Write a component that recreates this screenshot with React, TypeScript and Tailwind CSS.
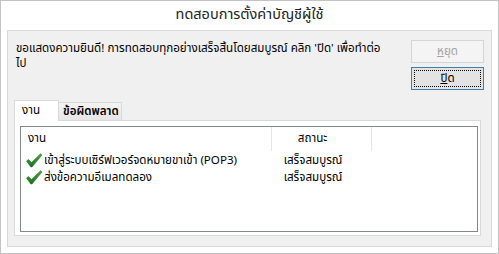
import React from 'react'

const font = { fontFamily: "Tahoma, 'Leelawadee UI', 'Noto Sans Thai', 'Noto Sans', 'DejaVu Sans', sans-serif" }

function Check() {
  return (
    <svg width="18" height="15" viewBox="0 0 18 15" className="shrink-0">
      <defs>
        <linearGradient id="chk" x1="0" y1="0" x2="0" y2="1">
          <stop offset="0" stopColor="#4fa84a" />
          <stop offset="1" stopColor="#15711a" />
        </linearGradient>
      </defs>
      <polygon points="1.5,8 3.5,6.5 6.5,9.5 15.5,0.8 17,2 7,14 5.8,14" fill="url(#chk)" stroke="#1b5e1b" strokeWidth="0.5" strokeLinejoin="round" />
    </svg>
  )
}

const rows = [
  { task: 'เข้าสู่ระบบเซิร์ฟเวอร์จดหมายขาเข้า (POP3)', status: 'เสร็จสมบูรณ์' },
  { task: 'ส่งข้อความอีเมลทดลอง', status: 'เสร็จสมบูรณ์' },
]

export default function App() {
  return (
    <div
      style={font}
      className="w-[499px] h-[254px] bg-white border border-[#c4c4c4] flex flex-col text-[11.6px] text-black"
    >
      {/* title */}
      <div className="h-[29px] flex items-center justify-center text-[14.5px] text-[#222]">
        ทดสอบการตั้งค่าบัญชีผู้ใช้
      </div>

      <div className="mx-[6px] h-[217px] border border-[#d9d9d9] bg-[#f0f0f0] flex flex-col">
        {/* message + buttons */}
        <div className="flex pt-[9px] pl-[8px] pr-[7px]">
          <div className="flex-1 pt-[1px] leading-[15px] whitespace-nowrap">
            ขอแสดงความยินดี! การทดสอบทุกอย่างเสร็จสิ้นโดยสมบูรณ์ คลิก 'ปิด' เพื่อทำต่อ
            <br />
            ไป
          </div>
          <div className="w-[73px] flex flex-col gap-[4px]">
            <button className="h-[23px] border border-[#d5d5d5] bg-[#f4f4f4] text-[#a3a3a3] flex items-center justify-center">
              <span><span className="underline">ห</span>ยุด</span>
            </button>
            <button className="h-[23px] border border-[#3c7fb1] bg-[#e3e3e3] p-[2px] flex">
              <span className="flex-1 border border-dotted border-black flex items-center justify-center">
                <span><span className="underline">ป</span>ิด</span>
              </span>
            </button>
          </div>
        </div>

        {/* tabs */}
        <div className="mt-[10px] ml-[6px] mr-[10px] flex flex-col">
          <div className="flex items-end">
            <div className="relative z-10 -mb-px w-[45px] h-[21px] border border-b-0 border-[#d9d9d9] bg-white pl-[7px] flex items-center">
              งาน
            </div>
            <div className="w-[63px] h-[18px] border border-l-0 border-b-0 border-[#d9d9d9] bg-gradient-to-b from-[#f3f3f3] to-[#e6e6e6] pl-[4px] flex items-center font-semibold">
              ข้อผิดพลาด
            </div>
          </div>
          <div className="h-[116px] border border-[#d9d9d9] bg-white pt-[5px] pl-[5px] pr-[2px] pb-[3px] flex">
            <div className="flex-1 border border-[#828790] bg-white flex flex-col">
              <div className="h-[24px] flex">
                <div className="w-[251px] border-r border-[#e5e5e5] pl-[7px] flex items-center">งาน</div>
                <div className="w-[100px] border-r border-[#e5e5e5] pr-[18px] flex items-center justify-center">สถานะ</div>
              </div>
              <div className="pt-[1px]">
                {rows.map((r) => (
                  <div key={r.task} className="h-[17px] flex items-center">
                    <div className="w-[251px] pl-[4px] flex items-center gap-[1px]">
                      <Check />
                      <span className="whitespace-nowrap">{r.task}</span>
                    </div>
                    <div className="w-[100px] pr-[18px] flex justify-center whitespace-nowrap">{r.status}</div>
                  </div>
                ))}
              </div>
            </div>
          </div>
        </div>
      </div>
    </div>
  )
}
